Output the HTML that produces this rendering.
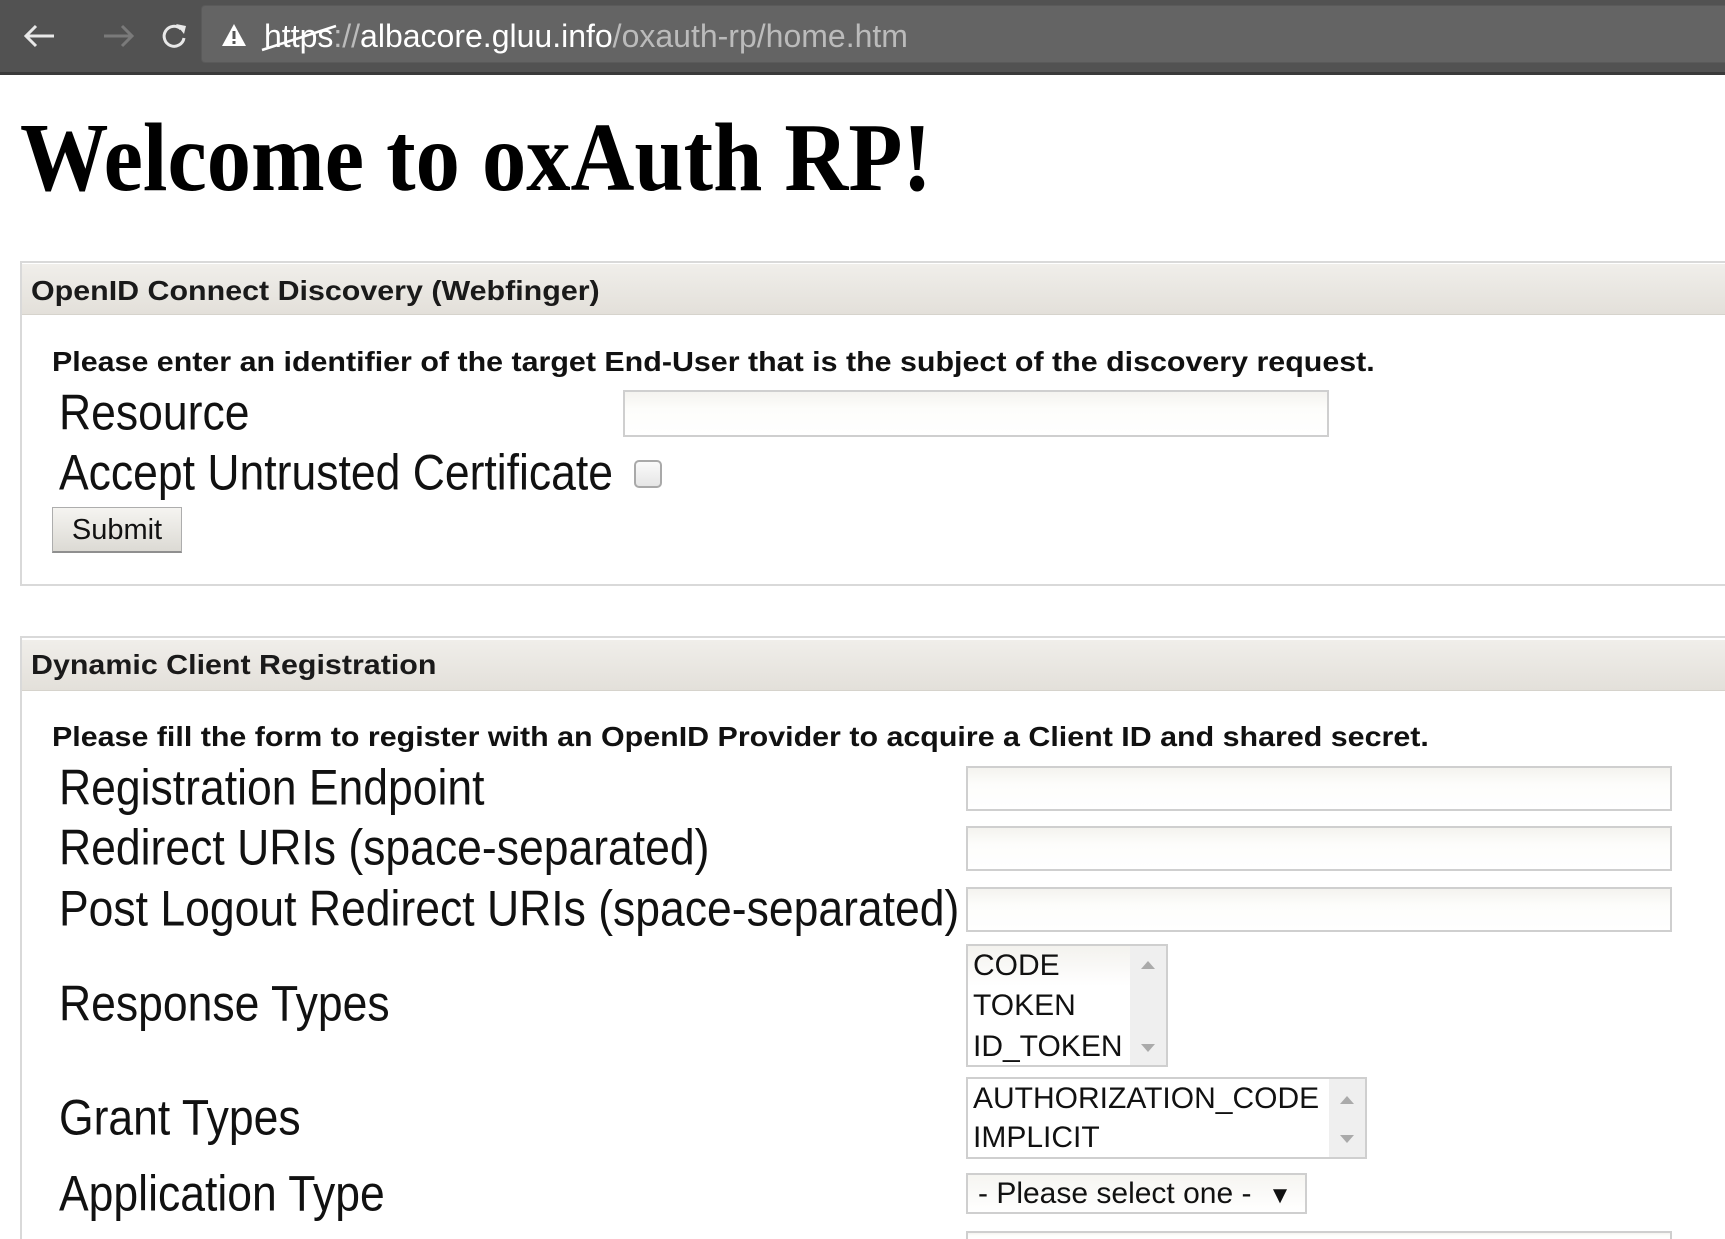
<!DOCTYPE html>
<html style="width:1725px;height:1239px;overflow:hidden"><head><meta charset="utf-8"><style>
*{margin:0;padding:0;box-sizing:border-box}
body{width:1725px;height:1239px;overflow:hidden;background:#fff;position:relative;font-family:"Liberation Sans",Arial,sans-serif;color:#111}
.a{position:absolute;white-space:nowrap}
.t{transform:scaleY(1.12);transform-origin:left center}
.w{transform:scale(1.216,1.12);transform-origin:left center}
.lab{font-size:44.5px;left:59px;height:50px;line-height:50px}
.inp{position:absolute;border:2px solid #cfcfcf;background:linear-gradient(#f4f3ef,#fdfdfb 40%,#fff)}
.hdr{position:absolute;left:22px;right:0;height:51px;background:linear-gradient(#f0eeea,#e3e0da);border-bottom:1px solid #d6d3cc}
.panel{position:absolute;left:20px;right:0;border:2px solid #d9d9d9;border-right:none}
.li{font-size:30px;height:40px;line-height:40px}
</style></head><body>
<div class="a" style="left:0;top:0;width:1725px;height:75px;background:#525252;border-bottom:3px solid #3a3a3a"></div>
<div class="a" style="left:201px;top:5px;width:1524px;height:58px;background:#646464;border:1px solid #5a5a5a;border-right:none;border-radius:4px 0 0 4px"></div>
<svg class="a" style="left:20px;top:20px" width="180" height="32" viewBox="0 0 180 32">
<path d="M34 16H6M16 6L6 16L16 26" stroke="#e8e8e8" stroke-width="3" fill="none"/>
<path d="M84 16H112M102 6L112 16L102 26" stroke="#7a7a7a" stroke-width="3" fill="none"/>
<path d="M161 9A10 10 0 1 0 164 18" stroke="#e8e8e8" stroke-width="3" fill="none"/>
<path d="M156 4L166 6L164 14Z" fill="#e8e8e8"/>
</svg>
<svg class="a" style="left:221px;top:22px" width="26" height="26" viewBox="0 0 26 26"><path d="M13 2L25 24H1Z" fill="#fff"/><rect x="11.5" y="9" width="3" height="8" fill="#555"/><rect x="11.5" y="19" width="3" height="3" fill="#555"/></svg>
<div class="a" style="left:264px;top:16px;font-size:32px;line-height:40px;color:#fff"><span style="position:relative">https<svg style="position:absolute;left:-4px;top:4px" width="80" height="30"><path d="M2 28L76 4" stroke="#fff" stroke-width="2.5"/></svg></span><span style="color:#bbb">://</span>albacore.gluu.info<span style="color:#bbb">/oxauth-rp/home.htm</span></div>

<div class="a" style="left:20px;top:108px;font-family:'Liberation Serif',serif;font-weight:bold;font-size:88.5px;line-height:100px;transform:scaleY(1.1);transform-origin:left center;color:#000">Welcome to oxAuth RP!</div>

<div class="panel" style="top:261px;height:325px"></div>
<div class="hdr" style="top:264px"></div>
<div class="a w" style="left:31px;top:273px;font-size:25px;line-height:36px;font-weight:bold;color:#1a1a1a">OpenID Connect Discovery (Webfinger)</div>
<div class="a w" style="left:52px;top:344px;font-size:25px;line-height:36px;font-weight:bold">Please enter an identifier of the target End-User that is the subject of the discovery request.</div>
<div class="a t lab" style="top:389px">Resource</div>
<div class="inp" style="left:623px;top:390px;width:706px;height:47px"></div>
<div class="a t lab" style="top:449px">Accept Untrusted Certificate</div>
<div class="a" style="left:634px;top:460px;width:28px;height:28px;border:2px solid #a9a9a9;border-radius:5px;background:linear-gradient(#fafafa,#e6e6e6)"></div>
<div class="a" style="left:52px;top:507px;width:130px;height:46px;border:1px solid #adadad;border-bottom:2px solid #8f8f8f;background:linear-gradient(#f5f4f1,#dcdad4);font-size:29px;line-height:44px;text-align:center">Submit</div>

<div class="panel" style="top:636px;height:603px;border-bottom:none"></div>
<div class="hdr" style="top:640px"></div>
<div class="a w" style="left:31px;top:647px;font-size:25px;line-height:36px;font-weight:bold;color:#1a1a1a">Dynamic Client Registration</div>
<div class="a w" style="left:52px;top:719px;font-size:25px;line-height:36px;font-weight:bold">Please fill the form to register with an OpenID Provider to acquire a Client ID and shared secret.</div>
<div class="a t lab" style="top:764px">Registration Endpoint</div>
<div class="inp" style="left:966px;top:766px;width:706px;height:45px"></div>
<div class="a t lab" style="top:824px">Redirect URIs (space-separated)</div>
<div class="inp" style="left:966px;top:826px;width:706px;height:45px"></div>
<div class="a t lab" style="top:885px">Post Logout Redirect URIs (space-separated)</div>
<div class="inp" style="left:966px;top:887px;width:706px;height:45px"></div>

<div class="a t lab" style="top:980px">Response Types</div>
<div class="a" style="left:966px;top:944px;width:202px;height:123px;border:2px solid #cfcfcf;background:#fff">
 <div class="a" style="right:0;top:0;width:36px;height:119px;background:#efefef"></div>
 <div class="a" style="left:0;top:0;width:162px;height:40px;background:linear-gradient(#f3f2ee,#fff)"></div>
 <div class="a li" style="left:5px;top:0">CODE</div>
 <div class="a li" style="left:5px;top:40px">TOKEN</div>
 <div class="a li" style="left:5px;top:81px">ID_TOKEN</div>
 <div class="a" style="right:11px;top:15px;border:7px solid transparent;border-bottom:8px solid #aaa;border-top:0"></div>
 <div class="a" style="right:11px;top:98px;border:7px solid transparent;border-top:8px solid #aaa;border-bottom:0"></div>
</div>

<div class="a t lab" style="top:1094px">Grant Types</div>
<div class="a" style="left:966px;top:1077px;width:401px;height:82px;border:2px solid #cfcfcf;background:#fff">
 <div class="a" style="right:0;top:0;width:36px;height:78px;background:#efefef"></div>
 <div class="a li" style="left:5px;top:0">AUTHORIZATION_CODE</div>
 <div class="a li" style="left:5px;top:39px">IMPLICIT</div>
 <div class="a" style="right:11px;top:17px;border:7px solid transparent;border-bottom:8px solid #aaa;border-top:0"></div>
 <div class="a" style="right:11px;top:56px;border:7px solid transparent;border-top:8px solid #aaa;border-bottom:0"></div>
</div>

<div class="a t lab" style="top:1170px">Application Type</div>
<div class="a" style="left:966px;top:1173px;width:341px;height:41px;border:2px solid #cfcfcf;background:linear-gradient(#f6f5f1,#fff);font-size:30px;line-height:37px;padding-left:10px">- Please select one - &nbsp;<span style="font-size:24px">▼</span></div>
<div class="inp" style="left:966px;top:1231px;width:706px;height:8px;border-bottom:none"></div>
</body></html>
